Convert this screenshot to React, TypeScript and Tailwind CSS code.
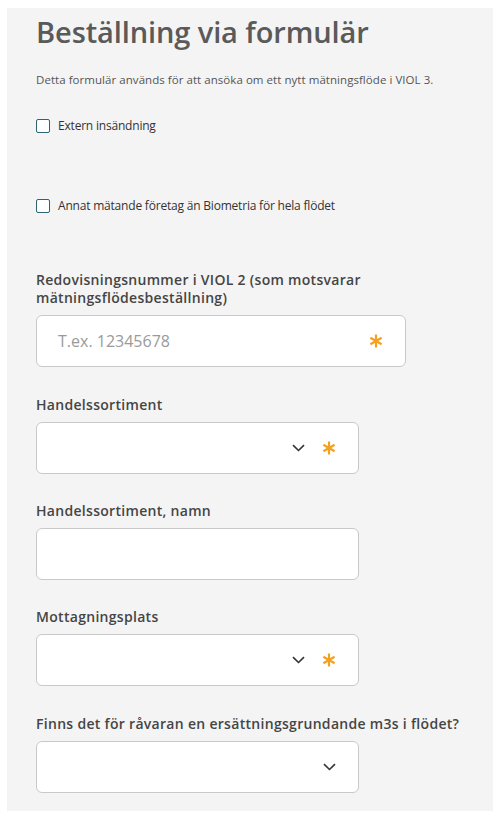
import React from "react";

const font = { fontFamily: '"Open Sans", "Noto Sans", sans-serif' };

function Asterisk() {
  return (
    <svg width="14" height="14" viewBox="0 0 14 14" className="shrink-0">
      <g stroke="#f4a11e" strokeWidth="2.2" strokeLinecap="butt">
        <line x1="7" y1="0.5" x2="7" y2="13.5" />
        <line x1="1.4" y1="3.75" x2="12.6" y2="10.25" />
        <line x1="1.4" y1="10.25" x2="12.6" y2="3.75" />
      </g>
    </svg>
  );
}

function Chevron() {
  return (
    <svg width="13" height="8" viewBox="0 0 13 8" className="shrink-0">
      <path d="M1 1.2 L6.5 6.5 L12 1.2" fill="none" stroke="#333" strokeWidth="1.6" />
    </svg>
  );
}

function Checkbox({ label, className }: { label: string; className?: string }) {
  return (
    <div className={"flex items-center h-4 " + (className ?? "")}>
      <div className="w-[14px] h-[14px] border-[1.5px] border-[#2d6370] rounded-[2px] bg-white shrink-0" />
      <span className="ml-[8px] text-[12px] leading-4 text-[#333] tracking-[-0.2px]">{label}</span>
    </div>
  );
}

function Label({ children, className }: { children: React.ReactNode; className?: string }) {
  return (
    <div className={"text-[14px] leading-[18px] font-semibold text-[#454545] tracking-[0.3px] " + (className ?? "")}>
      {children}
    </div>
  );
}

function Select({ required }: { required?: boolean }) {
  return (
    <div className="mt-2 w-[323px] h-[52px] bg-white border border-[#c9c9c9] rounded-[6px] flex items-center justify-end pr-[22px]">
      <Chevron />
      {required ? (
        <div className="ml-[17px]">
          <Asterisk />
        </div>
      ) : null}
    </div>
  );
}

export default function App() {
  return (
    <div className="bg-white min-h-[827px] pt-[8px]" style={font}>
      <div className="mx-[7px] w-[486px] bg-[#f4f4f4] pl-[29px] pt-[6px] pb-[18px]">
        <h1 className="text-[29px] leading-[36px] font-semibold text-[#5a5a5a] tracking-[-0.1px]">
          Beställning via formulär
        </h1>
        <p className="mt-[22px] text-[11.5px] leading-4 text-[#555] tracking-[0.05px]">
          Detta formulär används för att ansöka om ett nytt mätningsflöde i VIOL 3.
        </p>
        <Checkbox className="mt-[30px]" label="Extern insändning" />
        <Checkbox className="mt-[64px]" label="Annat mätande företag än Biometria för hela flödet" />

        <Label className="mt-[57px]">
          Redovisningsnummer i VIOL 2 (som motsvarar
          <br />
          mätningsflödesbeställning)
        </Label>
        <div className="mt-2 w-[370px] h-[52px] bg-white border border-[#c9c9c9] rounded-[6px] flex items-center pl-[21px] pr-[22px]">
          <span className="flex-1 text-[16px] text-[#9a9a9a]">T.ex. 12345678</span>
          <Asterisk />
        </div>

        <Label className="mt-[29px]">Handelssortiment</Label>
        <Select required />

        <Label className="mt-[28px]">Handelssortiment, namn</Label>
        <div className="mt-2 w-[323px] h-[52px] bg-white border border-[#c9c9c9] rounded-[6px]" />

        <Label className="mt-[28px]">Mottagningsplats</Label>
        <Select required />

        <Label className="mt-[29px]">Finns det för råvaran en ersättningsgrundande m3s i flödet?</Label>
        <Select />
      </div>
    </div>
  );
}
